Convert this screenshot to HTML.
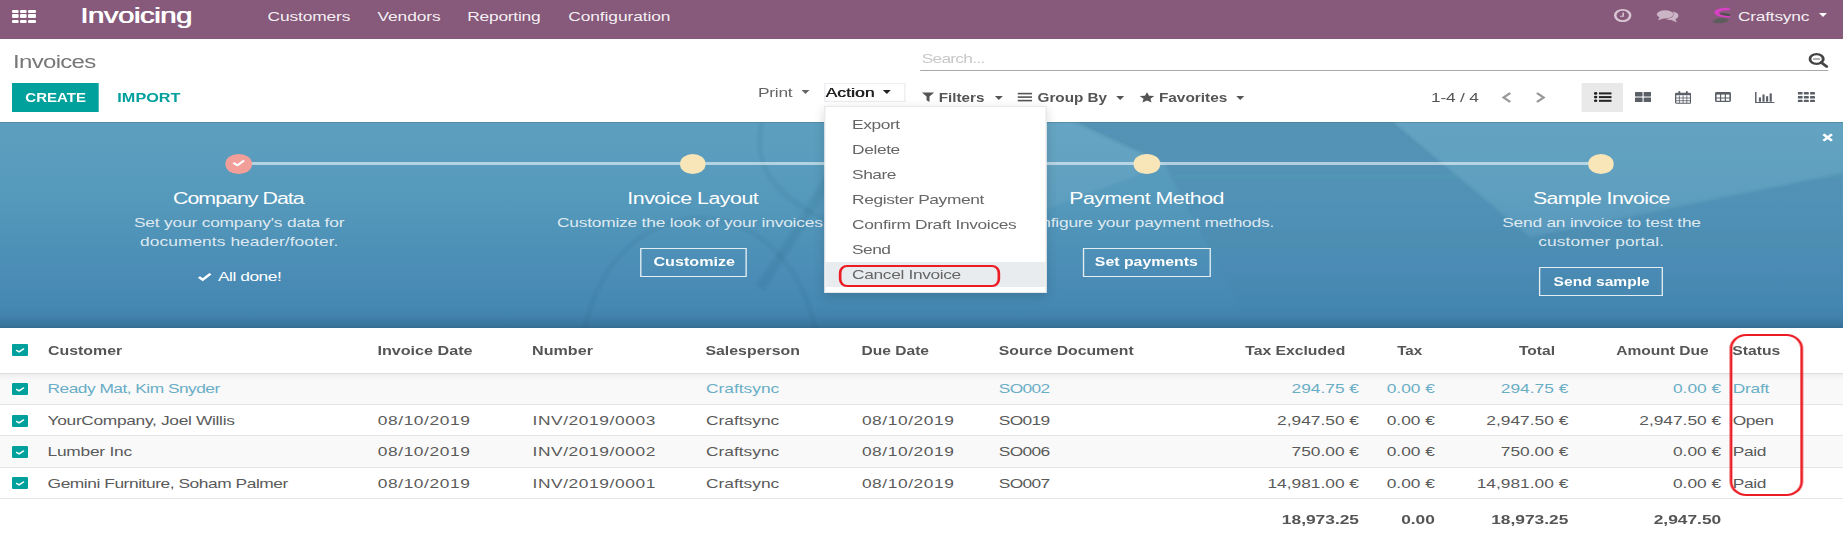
<!DOCTYPE html>
<html><head><meta charset="utf-8"><style>
html,body{margin:0;padding:0;background:#fff;width:1843px;height:539px;overflow:hidden}
#wrap{position:absolute;left:0;top:0;width:1382px;height:539px;transform:scaleX(1.333574529667149);transform-origin:0 0;overflow:hidden;font-family:'Liberation Sans',sans-serif}
.t{position:absolute;white-space:pre;font-family:'Liberation Sans',sans-serif}
.a{position:absolute}
#nav{position:absolute;left:0;top:0;width:1382px;height:38.5px;background:#875A7B}
.cell{position:absolute;background:#fff;border-radius:1px;width:5.3px;height:3.4px}
.caret{position:absolute;width:0;height:0;border-left:3.7px solid transparent;border-right:3.7px solid transparent;border-top:4px solid #666}
#banner{position:absolute;left:0;top:122px;width:1382px;height:206px;overflow:hidden;
 background:linear-gradient(180deg,#5c9fbf 0%,#599cbd 20%,#5397ba 43%,#4a8cb5 75%,#4588b1 89%,#4283ac 94%,#3b77a0 98%,#356d92 100%)}
.dot{position:absolute;width:19.5px;height:19.5px;border-radius:50%;background:#f9e6b8;top:154px}
.bbtn{position:absolute;border:1px solid rgba(255,255,255,0.85);box-sizing:border-box;height:28.5px}
#dd{position:absolute;left:618.3px;top:106.1px;width:167.1px;height:187px;background:#fff;border:1px solid rgba(0,0,0,0.09);box-sizing:border-box;box-shadow:0 3px 9px rgba(0,0,0,0.14)}
.row{position:absolute;left:0;width:1382px;border-bottom:1px solid #e3e5e8;box-sizing:border-box}
.cb{position:absolute;left:9px;width:12px;height:12px;background:#00A09D;border-radius:1px}
.cb svg{position:absolute;left:0;top:0}
.vi{position:absolute}

</style></head><body><div id="wrap">
<div id="nav">
 <div class="cell" style="left:8.9px;top:9.7px"></div><div class="cell" style="left:15.15px;top:9.7px"></div><div class="cell" style="left:21.45px;top:9.7px"></div>
 <div class="cell" style="left:8.9px;top:14.3px"></div><div class="cell" style="left:15.15px;top:14.3px"></div><div class="cell" style="left:21.45px;top:14.3px"></div>
 <div class="cell" style="left:8.9px;top:19.5px"></div><div class="cell" style="left:15.15px;top:19.5px"></div><div class="cell" style="left:21.45px;top:19.5px"></div>
 <!-- clock -->
 <svg class="a" style="left:1209px;top:8px" width="16" height="16" viewBox="0 0 16 16"><circle cx="7.8" cy="7.5" r="5.6" fill="none" stroke="#d9c6d4" stroke-width="1.9"/><path d="M8.2 4.6V8.2H5.8" fill="none" stroke="#d9c6d4" stroke-width="1.1"/></svg>
 <!-- chat -->
 <svg class="a" style="left:1241.5px;top:8.5px" width="18" height="15" viewBox="0 0 18 15"><ellipse cx="6.6" cy="5.3" rx="6.2" ry="4.1" fill="#cbb4c5"/><path d="M2.5 8 L1.3 11.3 L6 9.2Z" fill="#cbb4c5"/><path d="M12.2 2.6 C15 3.2 16.6 4.8 16.6 6.7 C16.6 8.3 15.6 9.4 14.4 10.2 L15.4 13.5 L11.3 11.1 C9.7 11.1 8.3 10.6 7.4 10 C10.6 9.8 13 7.8 13 5.3 C13 4.3 12.7 3.4 12.2 2.6Z" fill="#cbb4c5"/></svg>
 <!-- avatar -->
 <svg class="a" style="left:1284px;top:7px" width="15" height="17" viewBox="0 0 15 17"><defs><filter id="ab"><feGaussianBlur stdDeviation="0.5"/></filter></defs><ellipse cx="6.2" cy="13.6" rx="6" ry="2.5" fill="#5c5c5c" transform="rotate(-8 6.2 13.6)" filter="url(#ab)"/><ellipse cx="9.6" cy="7.6" rx="4.2" ry="1.3" fill="#4f4f4f" transform="rotate(10 9.6 7.6)"/><path d="M12.8 0.8 C8.5 0.4 1.6 1.6 1.6 5.4 C1.6 8.6 7 10.2 13.2 10.6 L13.4 9.1 C9 8.6 4.9 7.6 5 5.9 C5.2 3.8 9.8 3.2 13.6 3.4 Z" fill="#d840c6"/></svg>
 <div class="caret" style="left:1363.5px;top:13.1px;border-top-color:#fff"></div>
 <div class="t" style="top:6.38px;font-size:22px;line-height:20px;color:#fff;letter-spacing:-0.348px;text-shadow:0.7px 0 0 #fff;left:59.91px">Invoicing</div>
<div class="t" style="top:6.70px;font-size:13px;line-height:20px;color:rgba(255,255,255,0.93);letter-spacing:-0.096px;left:200.66px">Customers</div>
<div class="t" style="top:6.70px;font-size:13px;line-height:20px;color:rgba(255,255,255,0.93);letter-spacing:-0.039px;left:283.00px">Vendors</div>
<div class="t" style="top:6.70px;font-size:13px;line-height:20px;color:rgba(255,255,255,0.93);letter-spacing:-0.176px;left:350.41px">Reporting</div>
<div class="t" style="top:6.70px;font-size:13px;line-height:20px;color:rgba(255,255,255,0.93);letter-spacing:-0.064px;left:426.15px">Configuration</div>
<div class="t" style="top:6.80px;font-size:13px;line-height:20px;color:rgba(255,255,255,0.93);letter-spacing:-0.161px;left:1303.19px">Craftsync</div>
</div>
<!-- control panel -->
<div class="a" style="left:690.2px;top:69.8px;width:680.6px;height:1.2px;background:#a9a9a9"></div>
<svg class="a" style="left:1356px;top:53px" width="15" height="15" viewBox="0 0 15 15"><ellipse cx="6.2" cy="6" rx="5" ry="4.9" fill="none" stroke="#444" stroke-width="2.2"/><path d="M9.6 9.3 L13.8 13.6" stroke="#444" stroke-width="2.4" stroke-linecap="round"/><path d="M3.6 6H8.8" stroke="#666" stroke-width="1"/></svg>
<div class="a" style="left:9px;top:83.2px;width:65.2px;height:28.8px;background:#00A09D"></div>
<div class="caret" style="left:601px;top:90.2px;border-top-color:#666"></div>
<div class="a" style="left:618.3px;top:83.3px;width:61.1px;height:19.1px;border:1px solid #ebedf0;box-sizing:border-box"></div>
<div class="caret" style="left:662.1px;top:90.2px;border-top-color:#222"></div>
<svg class="a" style="left:691px;top:92.3px" width="10" height="10.2" viewBox="0 0 10 10"><path d="M0.3 0.3 H9.5 L6 4.3 V9.8 L3.8 8.2 V4.3Z" fill="#555"/></svg>
<div class="caret" style="left:745.7px;top:95.5px;border-top-color:#555"></div>
<svg class="a" style="left:763px;top:92px" width="11" height="10.5" viewBox="0 0 11 10.5"><rect x="0" y="0.8" width="11" height="1.6" fill="#555"/><rect x="0" y="4.3" width="11" height="1.6" fill="#555"/><rect x="0" y="7.8" width="11" height="1.6" fill="#555"/></svg>
<div class="caret" style="left:836.9px;top:95.5px;border-top-color:#555"></div>
<svg class="a" style="left:853.5px;top:91.5px" width="12.2" height="11" viewBox="0 0 24 23"><path d="M12 0.5 L15.3 7.6 L23.5 8.6 L17.4 14 L19.1 22 L12 17.9 L4.9 22 L6.6 14 L0.5 8.6 L8.7 7.6Z" fill="#555"/></svg>
<div class="caret" style="left:927.3px;top:95.5px;border-top-color:#555"></div>
<svg class="a" style="left:1124.5px;top:91.5px" width="9" height="11" viewBox="0 0 9 11"><path d="M7.5 1 L2.5 5.5 L7.5 10" fill="none" stroke="#999" stroke-width="2"/></svg>
<svg class="a" style="left:1150.5px;top:91.5px" width="9" height="11" viewBox="0 0 9 11"><path d="M1.5 1 L6.5 5.5 L1.5 10" fill="none" stroke="#999" stroke-width="2"/></svg>
<div class="a" style="left:1185.6px;top:83px;width:31.4px;height:28.8px;background:#e9e9e9"></div>
<svg class="a" style="left:1195px;top:92.3px" width="14" height="10.5" viewBox="0 0 14 10.5"><circle cx="1.5" cy="1.4" r="1.3" fill="#222"/><circle cx="1.5" cy="5.1" r="1.3" fill="#222"/><circle cx="1.5" cy="8.8" r="1.3" fill="#222"/><rect x="4" y="0.4" width="9.4" height="2" fill="#222"/><rect x="4" y="4.1" width="9.4" height="2" fill="#222"/><rect x="4" y="7.8" width="9.4" height="2" fill="#222"/></svg>
<svg class="a" style="left:1226px;top:91.9px" width="12.3" height="10.2" viewBox="0 0 12.3 10.2"><rect x="0" y="0" width="5.7" height="4.6" rx="0.6" fill="#5b6068"/><rect x="6.5" y="0" width="5.7" height="4.6" rx="0.6" fill="#5b6068"/><rect x="0" y="5.5" width="5.7" height="4.6" rx="0.6" fill="#5b6068"/><rect x="6.5" y="5.5" width="5.7" height="4.6" rx="0.6" fill="#5b6068"/></svg>
<svg class="a" style="left:1256px;top:90.8px" width="12.2" height="12.8" viewBox="0 0 12.2 12.8"><rect x="0.5" y="2.2" width="11.2" height="10.1" rx="0.8" fill="none" stroke="#5b6068" stroke-width="1"/><rect x="0.5" y="2.2" width="11.2" height="2" fill="#5b6068"/><path d="M3.3 4.5V12.3M6.1 4.5V12.3M8.9 4.5V12.3M0.5 7H11.7M0.5 9.7H11.7" stroke="#5b6068" stroke-width="0.7"/><rect x="2.6" y="0" width="1.4" height="3" rx="0.7" fill="#5b6068"/><rect x="8.2" y="0" width="1.4" height="3" rx="0.7" fill="#5b6068"/></svg>
<svg class="a" style="left:1286px;top:91.8px" width="12" height="10" viewBox="0 0 12 10"><rect x="0.6" y="0.6" width="10.8" height="8.8" rx="0.8" fill="none" stroke="#5b6068" stroke-width="1.2"/><rect x="0.6" y="0.6" width="10.8" height="2" fill="#5b6068"/><path d="M4.2 0.6V9.4M7.8 0.6V9.4M0.6 6H11.4" stroke="#5b6068" stroke-width="0.9"/></svg>
<svg class="a" style="left:1316px;top:91.6px" width="15" height="11.3" viewBox="0 0 15 11.3"><path d="M0.6 0 V10.6 H14.6" fill="none" stroke="#5b6068" stroke-width="1.1"/><rect x="2.9" y="5.4" width="1.6" height="4.3" fill="#5b6068"/><rect x="5.6" y="2.5" width="1.6" height="7.2" fill="#5b6068"/><rect x="8.3" y="4.2" width="1.6" height="5.5" fill="#5b6068"/><rect x="11" y="1.4" width="1.6" height="8.3" fill="#5b6068"/></svg>
<svg class="a" style="left:1348.3px;top:91.6px" width="13" height="10.4" viewBox="0 0 13 10.4"><g fill="#5b6068"><rect x="0" y="0" width="3.7" height="2.6" rx="0.6"/><rect x="4.65" y="0" width="3.7" height="2.6" rx="0.6"/><rect x="9.3" y="0" width="3.7" height="2.6" rx="0.6"/><rect x="0" y="3.9" width="3.7" height="2.6" rx="0.6"/><rect x="4.65" y="3.9" width="3.7" height="2.6" rx="0.6"/><rect x="9.3" y="3.9" width="3.7" height="2.6" rx="0.6"/><rect x="0" y="7.8" width="3.7" height="2.6" rx="0.6"/><rect x="4.65" y="7.8" width="3.7" height="2.6" rx="0.6"/><rect x="9.3" y="7.8" width="3.7" height="2.6" rx="0.6"/></g></svg>
<div class="t" style="top:51.76px;font-size:18px;line-height:20px;color:#777;letter-spacing:-0.512px;left:9.75px">Invoices</div>
<div class="t" style="top:49.20px;font-size:13px;line-height:20px;color:#c8c8c8;letter-spacing:-0.552px;left:691.15px">Search...</div>
<div class="t" style="top:87.60px;font-size:13px;line-height:20px;color:#fff;font-weight:700;transform:scaleX(0.8658);left:19.42px;transform-origin:0 0">CREATE</div>
<div class="t" style="top:87.60px;font-size:13px;line-height:20px;color:#00A09D;font-weight:700;transform:scaleX(0.9358);left:87.66px;transform-origin:0 0">IMPORT</div>
<div class="t" style="top:82.50px;font-size:13px;line-height:20px;color:#666;letter-spacing:-0.160px;left:568.32px">Print</div>
<div class="t" style="top:82.50px;font-size:13px;line-height:20px;color:#222;letter-spacing:0.106px;text-shadow:0.4px 0 0 #222;left:618.94px">Action</div>
<div class="t" style="top:87.70px;font-size:13px;line-height:20px;color:#555;font-weight:700;transform:scaleX(0.8764);left:704.12px;transform-origin:0 0">Filters</div>
<div class="t" style="top:87.70px;font-size:13px;line-height:20px;color:#555;font-weight:700;transform:scaleX(0.8811);left:777.53px;transform-origin:0 0">Group By</div>
<div class="t" style="top:87.70px;font-size:13px;line-height:20px;color:#555;font-weight:700;transform:scaleX(0.8872);left:869.17px;transform-origin:0 0">Favorites</div>
<div class="t" style="top:87.60px;font-size:13px;line-height:20px;color:#555;letter-spacing:-0.144px;left:1073.06px">1-4 / 4</div>
<!-- banner -->
<div id="banner">
 <div class="a" style="left:0;top:0;width:1382px;height:1px;background:rgba(0,0,0,0.12)"></div>
 <svg class="a" style="left:0;top:0" width="1382" height="206" viewBox="0 0 1843 206" preserveAspectRatio="none"><defs><linearGradient id="dg" x1="0" y1="0" x2="0" y2="1"><stop offset="0" stop-color="#0a2846" stop-opacity="0.08"/><stop offset="0.55" stop-color="#0a2846" stop-opacity="0.03"/><stop offset="1" stop-color="#0a2846" stop-opacity="0"/></linearGradient><filter id="bl" x="-10%" y="-10%" width="120%" height="120%"><feGaussianBlur stdDeviation="1.5"/></filter><filter id="bl2" x="-10%" y="-10%" width="120%" height="120%"><feGaussianBlur stdDeviation="1.8"/></filter></defs><g filter="url(#bl)"><polygon points="1072,0 1395,0 1530,114 1843,50 1843,206 1250,206 1165,43" fill="url(#dg)"/><polygon points="1395,0 1843,0 1843,50 1530,114" fill="rgba(255,255,255,0.05)"/><polygon points="1040,0 1072,0 1165,43 1040,90" fill="rgba(255,255,255,0.06)"/></g><g fill="none" stroke="rgba(20,55,85,0.09)" filter="url(#bl2)"><ellipse cx="700" cy="238" rx="118" ry="142" stroke-width="3"/><path d="M762 0 C752 40 772 75 830 100" stroke-width="3.5"/><path d="M830 55 C805 95 785 130 760 165" stroke-width="9"/></g></svg>
 <div class="a" style="left:179.2px;top:40px;width:1021px;height:3px;background:rgba(255,255,255,0.55)"></div>
</div>
<div class="dot" style="left:169.45px;background:#f29e99"></div>
<svg class="a" style="left:173px;top:158px" width="12" height="10" viewBox="0 0 12 10"><path d="M2.5 5.2 L5 7.3 L9.5 3" fill="none" stroke="#fff" stroke-width="1.8" stroke-linecap="round" stroke-linejoin="round"/></svg>
<div class="dot" style="left:509.95px"></div>
<div class="dot" style="left:850.25px"></div>
<div class="dot" style="left:1190.55px"></div>
<svg class="a" style="left:148px;top:272px" width="11" height="10" viewBox="0 0 11 10"><path d="M1.2 5 L4 7.8 L9.8 1.8" fill="none" stroke="#fff" stroke-width="2.2"/></svg>
<div class="bbtn" style="left:479.5px;top:248px;width:80.3px"></div>
<div class="bbtn" style="left:811.8px;top:248px;width:96.5px"></div>
<div class="bbtn" style="left:1154.2px;top:267.3px;width:92.5px;height:28.9px"></div>
<svg class="a" style="left:1365.5px;top:133.3px" width="9" height="9" viewBox="0 0 9 9"><path d="M1.3 1.3 L7.7 7.7 M7.7 1.3 L1.3 7.7" stroke="#fff" stroke-width="2.2"/></svg>
<div class="t" style="top:189.26px;font-size:16px;line-height:20px;color:#fff;letter-spacing:-0.724px;left:129.73px">Company Data</div>
<div class="t" style="top:212.80px;font-size:13px;line-height:20px;color:rgba(255,255,255,0.82);letter-spacing:-0.136px;left:100.41px">Set your company's data for</div>
<div class="t" style="top:231.80px;font-size:13px;line-height:20px;color:rgba(255,255,255,0.82);letter-spacing:0.058px;left:104.98px">documents header/footer.</div>
<div class="t" style="top:266.50px;font-size:13px;line-height:20px;color:#fff;letter-spacing:-0.344px;left:163.47px">All done!</div>
<div class="t" style="top:189.26px;font-size:16px;line-height:20px;color:#fff;letter-spacing:-0.352px;left:470.39px">Invoice Layout</div>
<div class="t" style="top:212.80px;font-size:13px;line-height:20px;color:rgba(255,255,255,0.82);letter-spacing:-0.149px;left:417.60px">Customize the look of your invoices.</div>
<div class="t" style="top:252.20px;font-size:13px;line-height:20px;color:#fff;font-weight:700;transform:scaleX(0.9309);left:489.59px;transform-origin:0 0">Customize</div>
<div class="t" style="top:189.26px;font-size:16px;line-height:20px;color:#fff;letter-spacing:-0.352px;left:801.75px">Payment Method</div>
<div class="t" style="top:212.80px;font-size:13px;line-height:20px;color:rgba(255,255,255,0.82);letter-spacing:-0.163px;left:764.56px">Configure your payment methods.</div>
<div class="t" style="top:252.20px;font-size:13px;line-height:20px;color:#fff;font-weight:700;transform:scaleX(0.9135);left:821.25px;transform-origin:0 0">Set payments</div>
<div class="t" style="top:189.26px;font-size:16px;line-height:20px;color:#fff;letter-spacing:-0.489px;left:1149.47px">Sample Invoice</div>
<div class="t" style="top:212.80px;font-size:13px;line-height:20px;color:rgba(255,255,255,0.82);letter-spacing:-0.159px;left:1126.45px">Send an invoice to test the</div>
<div class="t" style="top:231.80px;font-size:13px;line-height:20px;color:rgba(255,255,255,0.82);letter-spacing:0.075px;left:1153.44px">customer portal.</div>
<div class="t" style="top:271.70px;font-size:13px;line-height:20px;color:#fff;font-weight:700;transform:scaleX(0.8976);left:1164.54px;transform-origin:0 0">Send sample</div>
<!-- dropdown -->
<div id="dd"></div>
<div class="a" style="left:619.3px;top:261.9px;width:165.1px;height:25.3px;background:#e9ecef"></div>
<div class="a" style="left:628.9px;top:264.6px;width:120.7px;height:22.2px;border-style:solid;border-color:#ec1c24;border-width:2.4px 2.3px;border-radius:6px/8px;box-sizing:border-box"></div>
<div class="t" style="top:115.20px;font-size:13px;line-height:20px;color:#666;letter-spacing:-0.301px;left:638.96px">Export</div>
<div class="t" style="top:140.10px;font-size:13px;line-height:20px;color:#666;letter-spacing:-0.301px;left:638.96px">Delete</div>
<div class="t" style="top:165.00px;font-size:13px;line-height:20px;color:#666;letter-spacing:-0.347px;left:638.96px">Share</div>
<div class="t" style="top:189.90px;font-size:13px;line-height:20px;color:#666;letter-spacing:-0.276px;left:638.96px">Register Payment</div>
<div class="t" style="top:214.80px;font-size:13px;line-height:20px;color:#666;letter-spacing:-0.245px;left:638.96px">Confirm Draft Invoices</div>
<div class="t" style="top:239.70px;font-size:13px;line-height:20px;color:#666;letter-spacing:-0.405px;left:638.96px">Send</div>
<div class="t" style="top:264.60px;font-size:13px;line-height:20px;color:#666;letter-spacing:-0.262px;left:638.96px">Cancel Invoice</div>
<!-- table -->
<div class="row" style="top:328px;height:45.9px;background:#fff;border-bottom-color:#dcdee2"></div>
<div class="row" style="top:373.9px;height:30.7px;background:#f9f9f9"></div>
<div class="row" style="top:404.6px;height:31.5px;background:#fff"></div>
<div class="row" style="top:436.1px;height:31.6px;background:#f9f9f9"></div>
<div class="row" style="top:467.7px;height:31.1px;background:#fff"></div>
<div class="a" style="left:0;top:373.9px;width:1382px;height:6px;background:linear-gradient(rgba(0,0,0,0.045),rgba(0,0,0,0))"></div>
<div class="cb" style="top:344.1px"><svg width="12" height="12" viewBox="0 0 12 12"><path d="M3.5 6.5 L5.3 7.8 L8.6 5" fill="none" stroke="#fff" stroke-width="1.3" stroke-linecap="round"/></svg></div>
<div class="cb" style="top:383px"><svg width="12" height="12" viewBox="0 0 12 12"><path d="M3.5 6.5 L5.3 7.8 L8.6 5" fill="none" stroke="#fff" stroke-width="1.3" stroke-linecap="round"/></svg></div>
<div class="cb" style="top:414.6px"><svg width="12" height="12" viewBox="0 0 12 12"><path d="M3.5 6.5 L5.3 7.8 L8.6 5" fill="none" stroke="#fff" stroke-width="1.3" stroke-linecap="round"/></svg></div>
<div class="cb" style="top:446px"><svg width="12" height="12" viewBox="0 0 12 12"><path d="M3.5 6.5 L5.3 7.8 L8.6 5" fill="none" stroke="#fff" stroke-width="1.3" stroke-linecap="round"/></svg></div>
<div class="cb" style="top:477.3px"><svg width="12" height="12" viewBox="0 0 12 12"><path d="M3.5 6.5 L5.3 7.8 L8.6 5" fill="none" stroke="#fff" stroke-width="1.3" stroke-linecap="round"/></svg></div>
<div class="t" style="top:340.50px;font-size:13px;line-height:20px;color:#555;font-weight:700;transform:scaleX(0.9168);left:35.69px;transform-origin:0 0">Customer</div>
<div class="t" style="top:340.50px;font-size:13px;line-height:20px;color:#555;font-weight:700;transform:scaleX(0.9320);left:283.30px;transform-origin:0 0">Invoice Date</div>
<div class="t" style="top:340.50px;font-size:13px;line-height:20px;color:#555;font-weight:700;transform:scaleX(0.9281);left:399.30px;transform-origin:0 0">Number</div>
<div class="t" style="top:340.50px;font-size:13px;line-height:20px;color:#555;font-weight:700;transform:scaleX(0.9154);left:529.40px;transform-origin:0 0">Salesperson</div>
<div class="t" style="top:340.50px;font-size:13px;line-height:20px;color:#555;font-weight:700;transform:scaleX(0.8981);left:646.31px;transform-origin:0 0">Due Date</div>
<div class="t" style="top:340.50px;font-size:13px;line-height:20px;color:#555;font-weight:700;transform:scaleX(0.9093);left:748.96px;transform-origin:0 0">Source Document</div>
<div class="t" style="top:340.50px;font-size:13px;line-height:20px;color:#555;font-weight:700;transform:scaleX(0.9061);left:926.40px;transform-origin:100% 0">Tax Excluded</div>
<div class="t" style="top:340.50px;font-size:13px;line-height:20px;color:#555;font-weight:700;transform:scaleX(0.8745);left:1044.64px;transform-origin:100% 0">Tax</div>
<div class="t" style="top:340.50px;font-size:13px;line-height:20px;color:#555;font-weight:700;transform:scaleX(0.8995);left:1135.80px;transform-origin:100% 0">Total</div>
<div class="t" style="top:340.50px;font-size:13px;line-height:20px;color:#555;font-weight:700;transform:scaleX(0.8975);left:1203.86px;transform-origin:100% 0">Amount Due</div>
<div class="t" style="top:340.50px;font-size:13px;line-height:20px;color:#555;font-weight:700;transform:scaleX(0.9059);left:1298.99px;transform-origin:0 0">Status</div>
<div class="t" style="top:379.10px;font-size:13px;line-height:20px;color:#6aaec6;letter-spacing:-0.391px;left:35.69px">Ready Mat, Kim Snyder</div>
<div class="t" style="top:379.10px;font-size:13px;line-height:20px;color:#6aaec6;letter-spacing:0.000px;left:529.40px">Craftsync</div>
<div class="t" style="top:379.10px;font-size:13px;line-height:20px;color:#6aaec6;letter-spacing:-0.506px;left:748.96px">SO002</div>
<div class="t" style="top:379.10px;font-size:13px;line-height:20px;color:#6aaec6;letter-spacing:0.000px;left:968.46px">294.75 €</div>
<div class="t" style="top:379.10px;font-size:13px;line-height:20px;color:#6aaec6;letter-spacing:0.000px;left:1039.82px">0.00 €</div>
<div class="t" style="top:379.10px;font-size:13px;line-height:20px;color:#6aaec6;letter-spacing:0.000px;left:1125.40px">294.75 €</div>
<div class="t" style="top:379.10px;font-size:13px;line-height:20px;color:#6aaec6;letter-spacing:0.000px;left:1254.51px">0.00 €</div>
<div class="t" style="top:379.10px;font-size:13px;line-height:20px;color:#6aaec6;letter-spacing:-0.211px;left:1299.36px">Draft</div>
<div class="t" style="top:411.00px;font-size:13px;line-height:20px;color:#5a5a5a;letter-spacing:-0.241px;left:35.69px">YourCompany, Joel Willis</div>
<div class="t" style="top:411.00px;font-size:13px;line-height:20px;color:#5a5a5a;letter-spacing:0.434px;left:283.30px">08/10/2019</div>
<div class="t" style="top:411.00px;font-size:13px;line-height:20px;color:#5a5a5a;letter-spacing:0.448px;left:399.30px">INV/2019/0003</div>
<div class="t" style="top:411.00px;font-size:13px;line-height:20px;color:#5a5a5a;letter-spacing:0.000px;left:529.40px">Craftsync</div>
<div class="t" style="top:411.00px;font-size:13px;line-height:20px;color:#5a5a5a;letter-spacing:0.434px;left:646.31px">08/10/2019</div>
<div class="t" style="top:411.00px;font-size:13px;line-height:20px;color:#5a5a5a;letter-spacing:-0.506px;left:748.96px">SO019</div>
<div class="t" style="top:411.00px;font-size:13px;line-height:20px;color:#5a5a5a;letter-spacing:0.000px;left:957.61px">2,947.50 €</div>
<div class="t" style="top:411.00px;font-size:13px;line-height:20px;color:#5a5a5a;letter-spacing:0.000px;left:1039.82px">0.00 €</div>
<div class="t" style="top:411.00px;font-size:13px;line-height:20px;color:#5a5a5a;letter-spacing:0.000px;left:1114.56px">2,947.50 €</div>
<div class="t" style="top:411.00px;font-size:13px;line-height:20px;color:#5a5a5a;letter-spacing:0.000px;left:1229.21px">2,947.50 €</div>
<div class="t" style="top:411.00px;font-size:13px;line-height:20px;color:#5a5a5a;letter-spacing:-0.318px;left:1299.36px">Open</div>
<div class="t" style="top:442.30px;font-size:13px;line-height:20px;color:#5a5a5a;letter-spacing:-0.188px;left:35.69px">Lumber Inc</div>
<div class="t" style="top:442.30px;font-size:13px;line-height:20px;color:#5a5a5a;letter-spacing:0.434px;left:283.30px">08/10/2019</div>
<div class="t" style="top:442.30px;font-size:13px;line-height:20px;color:#5a5a5a;letter-spacing:0.448px;left:399.30px">INV/2019/0002</div>
<div class="t" style="top:442.30px;font-size:13px;line-height:20px;color:#5a5a5a;letter-spacing:0.000px;left:529.40px">Craftsync</div>
<div class="t" style="top:442.30px;font-size:13px;line-height:20px;color:#5a5a5a;letter-spacing:0.434px;left:646.31px">08/10/2019</div>
<div class="t" style="top:442.30px;font-size:13px;line-height:20px;color:#5a5a5a;letter-spacing:-0.506px;left:748.96px">SO006</div>
<div class="t" style="top:442.30px;font-size:13px;line-height:20px;color:#5a5a5a;letter-spacing:0.000px;left:968.46px">750.00 €</div>
<div class="t" style="top:442.30px;font-size:13px;line-height:20px;color:#5a5a5a;letter-spacing:0.000px;left:1039.82px">0.00 €</div>
<div class="t" style="top:442.30px;font-size:13px;line-height:20px;color:#5a5a5a;letter-spacing:0.000px;left:1125.40px">750.00 €</div>
<div class="t" style="top:442.30px;font-size:13px;line-height:20px;color:#5a5a5a;letter-spacing:0.000px;left:1254.51px">0.00 €</div>
<div class="t" style="top:442.30px;font-size:13px;line-height:20px;color:#5a5a5a;letter-spacing:-0.260px;left:1299.36px">Paid</div>
<div class="t" style="top:473.50px;font-size:13px;line-height:20px;color:#5a5a5a;letter-spacing:-0.328px;left:35.69px">Gemini Furniture, Soham Palmer</div>
<div class="t" style="top:473.50px;font-size:13px;line-height:20px;color:#5a5a5a;letter-spacing:0.434px;left:283.30px">08/10/2019</div>
<div class="t" style="top:473.50px;font-size:13px;line-height:20px;color:#5a5a5a;letter-spacing:0.448px;left:399.30px">INV/2019/0001</div>
<div class="t" style="top:473.50px;font-size:13px;line-height:20px;color:#5a5a5a;letter-spacing:0.000px;left:529.40px">Craftsync</div>
<div class="t" style="top:473.50px;font-size:13px;line-height:20px;color:#5a5a5a;letter-spacing:0.434px;left:646.31px">08/10/2019</div>
<div class="t" style="top:473.50px;font-size:13px;line-height:20px;color:#5a5a5a;letter-spacing:-0.506px;left:748.96px">SO007</div>
<div class="t" style="top:473.50px;font-size:13px;line-height:20px;color:#5a5a5a;letter-spacing:0.000px;left:950.38px">14,981.00 €</div>
<div class="t" style="top:473.50px;font-size:13px;line-height:20px;color:#5a5a5a;letter-spacing:0.000px;left:1039.82px">0.00 €</div>
<div class="t" style="top:473.50px;font-size:13px;line-height:20px;color:#5a5a5a;letter-spacing:0.000px;left:1107.32px">14,981.00 €</div>
<div class="t" style="top:473.50px;font-size:13px;line-height:20px;color:#5a5a5a;letter-spacing:0.000px;left:1254.51px">0.00 €</div>
<div class="t" style="top:473.50px;font-size:13px;line-height:20px;color:#5a5a5a;letter-spacing:-0.260px;left:1299.36px">Paid</div>
<div class="t" style="top:509.90px;font-size:13px;line-height:20px;color:#555;font-weight:700;transform:scaleX(1.0000);left:961.22px;transform-origin:100% 0">18,973.25</div>
<div class="t" style="top:509.90px;font-size:13px;line-height:20px;color:#555;font-weight:700;transform:scaleX(1.0000);left:1050.67px;transform-origin:100% 0">0.00</div>
<div class="t" style="top:509.90px;font-size:13px;line-height:20px;color:#555;font-weight:700;transform:scaleX(1.0000);left:1118.17px;transform-origin:100% 0">18,973.25</div>
<div class="t" style="top:509.90px;font-size:13px;line-height:20px;color:#555;font-weight:700;transform:scaleX(1.0000);left:1240.06px;transform-origin:100% 0">2,947.50</div>
<div class="a" style="left:1296.7px;top:334px;width:55.8px;height:161.5px;border-style:solid;border-color:#ec1c24;border-width:2.2px 2.3px;border-radius:12.5px/14.5px;box-sizing:border-box"></div>

</div></body></html>
